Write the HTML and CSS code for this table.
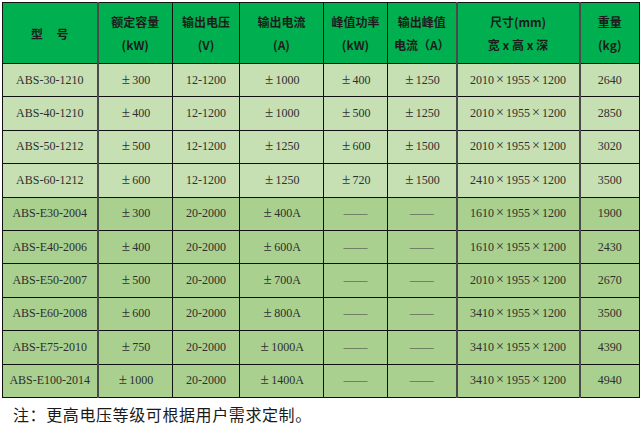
FILE: index.html
```html
<!DOCTYPE html>
<html lang="zh-CN">
<head>
<meta charset="utf-8">
<link rel="stylesheet" href="styles.css">
</head>
<body>
<table class="spec">
  <colgroup>
    <col class="c1"><col class="c2"><col class="c3"><col class="c4"><col class="c5"><col class="c6"><col class="c7"><col class="c8">
  </colgroup>
  <thead>
    <tr>
      <th class="thick-r">型&nbsp;&nbsp;&nbsp;&nbsp;&nbsp;号</th>
      <th>额定容量<br>(kW)</th>
      <th>输出电压<br>(V)</th>
      <th>输出电流<br>(A)</th>
      <th>峰值功率<br>(kW)</th>
      <th>输出峰值<br>电流（A）</th>
      <th class="thick-l thick-r">尺寸(mm)<br>宽 x 高 x 深</th>
      <th>重量<br>(kg)</th>
    </tr>
  </thead>
  <tbody>
    <tr class="light"><td class="thick-r model">ABS-30-1210</td><td><span class="pm">±</span>300</td><td>12-1200</td><td><span class="pm">±</span>1000</td><td><span class="pm">±</span>400</td><td><span class="pm">±</span>1250</td><td class="thick-l thick-r">2010<span class="x">×</span>1955<span class="x">×</span>1200</td><td>2640</td></tr>
    <tr class="light"><td class="thick-r model">ABS-40-1210</td><td><span class="pm">±</span>400</td><td>12-1200</td><td><span class="pm">±</span>1000</td><td><span class="pm">±</span>500</td><td><span class="pm">±</span>1250</td><td class="thick-l thick-r">2010<span class="x">×</span>1955<span class="x">×</span>1200</td><td>2850</td></tr>
    <tr class="light"><td class="thick-r model">ABS-50-1212</td><td><span class="pm">±</span>500</td><td>12-1200</td><td><span class="pm">±</span>1250</td><td><span class="pm">±</span>600</td><td><span class="pm">±</span>1500</td><td class="thick-l thick-r">2010<span class="x">×</span>1955<span class="x">×</span>1200</td><td>3020</td></tr>
    <tr class="light"><td class="thick-r model">ABS-60-1212</td><td><span class="pm">±</span>600</td><td>12-1200</td><td><span class="pm">±</span>1250</td><td><span class="pm">±</span>720</td><td><span class="pm">±</span>1500</td><td class="thick-l thick-r">2410<span class="x">×</span>1955<span class="x">×</span>1200</td><td>3500</td></tr>
    <tr class="dark"><td class="thick-r model">ABS-E30-2004</td><td><span class="pm">±</span>300</td><td>20-2000</td><td><span class="pm">±</span>400A</td><td class="dash">——</td><td class="dash">——</td><td class="thick-l thick-r">1610<span class="x">×</span>1955<span class="x">×</span>1200</td><td>1900</td></tr>
    <tr class="dark"><td class="thick-r model">ABS-E40-2006</td><td><span class="pm">±</span>400</td><td>20-2000</td><td><span class="pm">±</span>600A</td><td class="dash">——</td><td class="dash">——</td><td class="thick-l thick-r">1610<span class="x">×</span>1955<span class="x">×</span>1200</td><td>2430</td></tr>
    <tr class="dark"><td class="thick-r model">ABS-E50-2007</td><td><span class="pm">±</span>500</td><td>20-2000</td><td><span class="pm">±</span>700A</td><td class="dash">——</td><td class="dash">——</td><td class="thick-l thick-r">2010<span class="x">×</span>1955<span class="x">×</span>1200</td><td>2670</td></tr>
    <tr class="dark"><td class="thick-r model">ABS-E60-2008</td><td><span class="pm">±</span>600</td><td>20-2000</td><td><span class="pm">±</span>800A</td><td class="dash">——</td><td class="dash">——</td><td class="thick-l thick-r">3410<span class="x">×</span>1955<span class="x">×</span>1200</td><td>3500</td></tr>
    <tr class="dark"><td class="thick-r model">ABS-E75-2010</td><td><span class="pm">±</span>750</td><td>20-2000</td><td><span class="pm">±</span>1000A</td><td class="dash">——</td><td class="dash">——</td><td class="thick-l thick-r">3410<span class="x">×</span>1955<span class="x">×</span>1200</td><td>4390</td></tr>
    <tr class="dark"><td class="thick-r model">ABS-E100-2014</td><td><span class="pm">±</span>1000</td><td>20-2000</td><td><span class="pm">±</span>1400A</td><td class="dash">——</td><td class="dash">——</td><td class="thick-l thick-r">3410<span class="x">×</span>1955<span class="x">×</span>1200</td><td>4940</td></tr>
  </tbody>
</table>
<p class="note">注：更高电压等级可根据用户需求定制。</p>
</body>
</html>
```
FILE: styles.css
```css
html, body {
  margin: 0;
  padding: 0;
  background: #ffffff;
}
body {
  padding: 2px 0 0 2px;
  font-family: "Liberation Serif", "Noto Sans CJK SC", serif;
  color: #2a2a2a;
}
.spec {
  border-collapse: collapse;
  table-layout: fixed;
  width: 637px;
  border: 1.5px solid #333;
}
.c1 { width: 95px; }
.c2 { width: 75px; }
.c3 { width: 67px; }
.c4 { width: 84px; }
.c5 { width: 64px; }
.c6 { width: 69px; }
.c7 { width: 123px; }
.c8 { width: 60px; }
.spec th, .spec td {
  border: 1px solid #111;
  padding: 0;
  text-align: center;
  vertical-align: middle;
  overflow: hidden;
  white-space: nowrap;
}
.spec th {
  background: #00b050;
  height: 60px;
  font-family: "Noto Sans CJK SC", sans-serif;
  font-weight: 700;
  font-size: 12px;
  line-height: 23px;
  color: #1c1c1c;
}
.spec td {
  height: 32.4px;
  font-size: 12px;
  color: #2e2e2e;
}
.spec td.dash {
  color: #444;
}
.pm {
  display: inline-block;
  width: 11px;
  margin-right: 1px;
  text-align: center;
  font-size: 15px;
  line-height: 12px;
}
.x {
  display: inline-block;
  width: 12px;
  text-align: center;
  font-size: 14px;
  line-height: 12px;
}
.spec .thick-r { border-right: 2px solid #4a4a4a; }
.spec .thick-l { border-left: 2px solid #4a4a4a; }
.light td { background: #c6e0b4; }
.dark td { background: #a9d08e; }
.note {
  margin: 6px 0 0 11px;
  font-family: "Noto Sans CJK SC", sans-serif;
  font-size: 16px;
  letter-spacing: 0.6px;
  line-height: 20px;
  color: #1a1a1a;
}
```
